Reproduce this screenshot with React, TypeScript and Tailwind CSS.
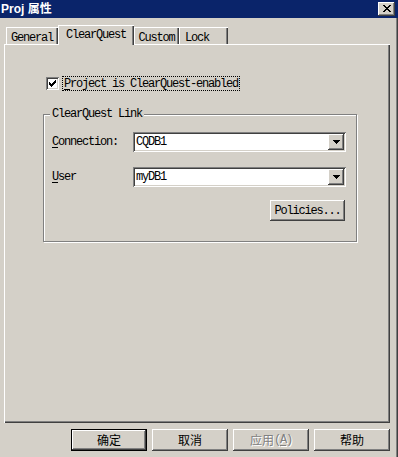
import React from 'react';

const raised = 'shadow-[inset_-1px_-1px_#404040,inset_1px_1px_#ffffff,inset_-2px_-2px_#808080]';
const sunken = 'shadow-[inset_1px_1px_#808080,inset_-1px_-1px_#ffffff,inset_2px_2px_#404040,inset_-2px_-2px_#d4d0c8]';
const mono = "font-['Liberation_Mono',monospace] text-[12px] tracking-[-1.2px] leading-[14px]";
const cjk = "font-['Noto_Sans_CJK_SC',sans-serif] text-[12px] leading-[14px]";

function Tab({ label, w, selected, left }: { label: string; w: string; selected?: boolean; left?: boolean }) {
  return (
    <div
      className={`${w} ${mono} flex ${left ? 'justify-start pl-[6px]' : 'justify-center'} text-black bg-[#d4d0c8] ${
        selected
          ? 'h-[20px] -mb-px pt-[3px] relative z-10 shadow-[inset_1px_1px_#ffffff,inset_-1px_0_#404040,inset_-2px_0_#808080]'
          : 'h-[17px] pt-[4px] shadow-[inset_1px_1px_#ffffff,inset_-1px_0_#404040,inset_-2px_0_#808080]'
      }`}
    >
      {label}
    </div>
  );
}

function Combo({ value }: { value: string }) {
  return (
    <div className={`w-[213px] h-[20px] bg-white ${sunken} flex items-center pl-[3px] pr-[2px]`}>
      <span className={`${mono} flex-1 text-black`}>{value}</span>
      <div className={`w-[16px] h-[16px] bg-[#d4d0c8] ${raised} flex items-center justify-center`}>
        <svg width="7" height="4" viewBox="0 0 7 4" shapeRendering="crispEdges">
          <path d="M0 0h7v1h-7z M1 1h5v1h-5z M2 2h3v1h-3z M3 3h1v1h-1z" fill="#000" />
        </svg>
      </div>
    </div>
  );
}

function Button({ children, def, disabled }: { children: React.ReactNode; def?: boolean; disabled?: boolean }) {
  return (
    <div className={`w-[76px] h-[22px] ${def ? 'border border-black' : ''} bg-[#d4d0c8]`}>
      <div
        className={`w-full h-full ${raised} flex items-center justify-center ${cjk} ${
          disabled ? 'text-[#808080] [text-shadow:1px_1px_0_#ffffff]' : 'text-black'
        }`}
      >
        {children}
      </div>
    </div>
  );
}

export default function App() {
  return (
    <div className="w-[398px] h-[457px] bg-[#d4d0c8] flex flex-col overflow-hidden">
      {/* Title bar */}
      <div className="h-[18px] bg-[#0a246a] flex items-center justify-between pl-[1px] pr-[3px] shrink-0">
        <span className="text-white font-bold text-[12px] leading-[14px] font-['Liberation_Sans','Noto_Sans_CJK_SC',sans-serif]">
          Proj 属性
        </span>
        <div className={`w-[17px] h-[14px] bg-[#d4d0c8] ${raised} flex items-center justify-center pb-px`}>
          <svg width="8" height="7" viewBox="0 0 8 7" shapeRendering="crispEdges">
            <path
              d="M0 0h2v1h-2z M6 0h2v1h-2z M1 1h2v1h-2z M5 1h2v1h-2z M2 2h4v1h-4z M3 3h2v1h-2z M2 4h4v1h-4z M1 5h2v1h-2z M5 5h2v1h-2z M0 6h2v1h-2z M6 6h2v1h-2z"
              fill="#000"
            />
          </svg>
        </div>
      </div>

      {/* Body */}
      <div className="flex-1 flex flex-col pl-[4px] pt-[7px] pr-[8px] shadow-[inset_-1px_0_#404040,inset_-2px_0_#808080]">
        {/* Tabs */}
        <div className="flex items-end h-[19px] pl-[2px] relative z-10">
          <Tab label="General" w="w-[52px]" />
          <Tab label="ClearQuest" w="w-[76px]" selected />
          <Tab label="Custom" w="w-[45px]" />
          <Tab label="Lock" w="w-[49px]" left />
        </div>

        {/* Tab page */}
        <div className="w-[386px] h-[379px] shadow-[inset_1px_1px_#ffffff,inset_-1px_-1px_#404040,inset_-2px_-2px_#808080] flex flex-col pt-[32px] pl-[39px]">
          <div className="flex items-center h-[15px] ml-[3px]">
            <div className={`w-[13px] h-[13px] bg-white ${sunken} flex items-center justify-center`}>
              <svg width="7" height="7" viewBox="0 0 7 7" shapeRendering="crispEdges">
                <path
                  d="M6 0h1v1h-1z M5 1h2v1h-2z M0 2h1v1h-1z M4 2h3v1h-3z M0 3h2v1h-2z M3 3h3v1h-3z M0 4h5v1h-5z M1 5h3v1h-3z M2 6h1v1h-1z"
                  fill="#000"
                />
              </svg>
            </div>
            <div className={`ml-[3px] h-[15px] px-[1px] border border-dotted border-black flex items-center ${mono} text-black`}>
              <span className="underline underline-offset-2">P</span>roject is ClearQuest-enabled
            </div>
          </div>

          {/* Group box */}
          <div className="relative mt-[23px] w-[314px] h-[128px] border border-[#808080] shadow-[inset_1px_1px_#ffffff,1px_1px_#ffffff] flex flex-col pt-[17px] pl-[8px] pr-[10px]">
            <span className={`absolute -top-[8px] left-[6px] px-[2px] bg-[#d4d0c8] ${mono} text-black`}>ClearQuest Link</span>

            <div className="flex items-center">
              <span className={`w-[81px] ${mono} text-black`}>
                <span className="underline underline-offset-2">C</span>onnection:
              </span>
              <Combo value="CQDB1" />
            </div>

            <div className="flex items-center mt-[15px]">
              <span className={`w-[81px] ${mono} text-black`}>
                <span className="underline underline-offset-2">U</span>ser
              </span>
              <Combo value="myDB1" />
            </div>

            <div className="flex justify-end mt-[13px] mr-[1px]">
              <div className={`w-[75px] h-[21px] bg-[#d4d0c8] ${raised} flex items-center justify-center ${mono} text-black`}>
                Policies...
              </div>
            </div>
          </div>
        </div>

        {/* Dialog buttons */}
        <div className="flex justify-end gap-[5px] mt-[6px]">
          <Button def>确定</Button>
          <Button>取消</Button>
          <Button disabled>
            应用<span className="font-['Liberation_Mono',monospace] tracking-[-1.2px]">(<span className="underline underline-offset-2">A</span>)</span>
          </Button>
          <Button>帮助</Button>
        </div>
      </div>
    </div>
  );
}
